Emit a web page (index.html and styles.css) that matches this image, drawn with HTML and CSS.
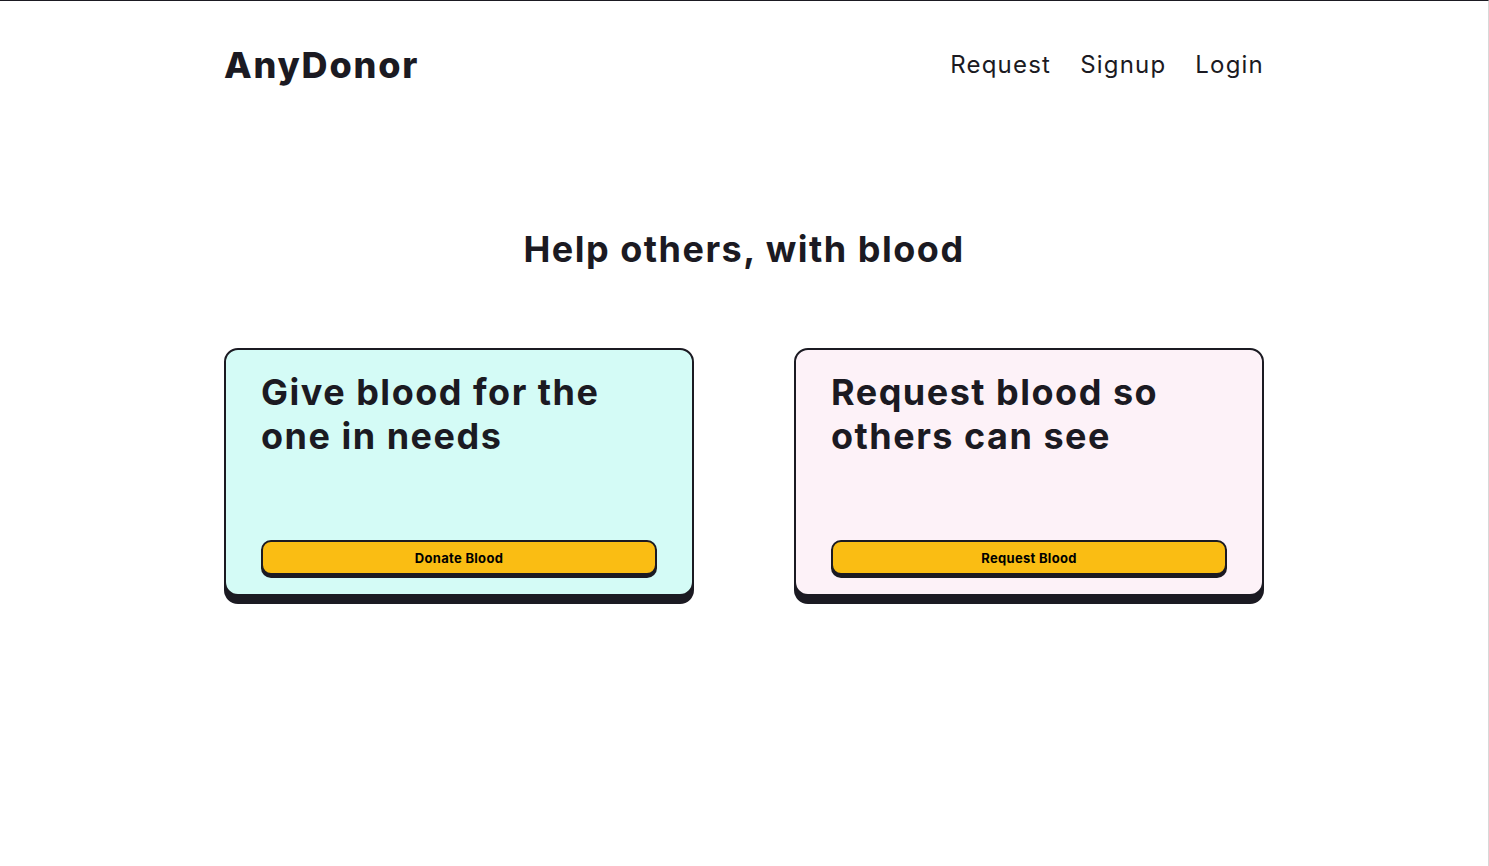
FILE: index.html
```html
<!DOCTYPE html>
<html lang="en">
<head>
<meta charset="utf-8">
<title>AnyDonor</title>
<link rel="stylesheet" href="styles.css">
</head>
<body>
<div class="frame">
  <div class="page">
    <header class="header">
      <a class="logo" href="#">AnyDonor</a>
      <nav class="nav">
        <a href="#">Request</a>
        <a href="#">Signup</a>
        <a href="#">Login</a>
      </nav>
    </header>
    <main class="main">
      <h1 class="title">Help others, with blood</h1>
      <div class="cards">
        <section class="card card-give">
          <h2 class="card-title">Give blood for the one in needs</h2>
          <button class="btn">Donate Blood</button>
        </section>
        <section class="card card-request">
          <h2 class="card-title">Request blood so others can see</h2>
          <button class="btn">Request Blood</button>
        </section>
      </div>
    </main>
  </div>
</div>
</body>
</html>
```

FILE: styles.css
```css
* { box-sizing: border-box; }
html, body { margin: 0; padding: 0; height: 100%; }
body {
  font-family: Inter, "Noto Sans", sans-serif;
  color: #1b1a22;
  background: #fff;
}
.frame {
  min-height: 100%;
  border-top: 1px solid #1b1a22;
  border-right: 1px solid #d8d8d8;
}
.page {
  width: 1040px;
  margin: 0 auto;
}
.header {
  display: flex;
  justify-content: space-between;
  align-items: center;
  height: 128px;
  padding-bottom: 1px;
}
.logo {
  font-size: 36px;
  font-weight: 800;
  color: #1b1a22;
  text-decoration: none;
  letter-spacing: 1.8px;
}
.nav { display: flex; gap: 29px; }
.nav a {
  font-size: 24px;
  color: #1b1a22;
  text-decoration: none;
  letter-spacing: 1.2px;
}
.main { padding-top: 96px; }
.title {
  margin: 0;
  text-align: center;
  font-size: 36px;
  font-weight: 700;
  line-height: 48px;
  letter-spacing: 1.5px;
}
.cards {
  display: flex;
  gap: 100px;
  margin-top: 75px;
}
.card {
  width: 470px;
  height: 248px;
  border: 2px solid #1b1a22;
  border-radius: 14px;
  box-shadow: 0 8px 0 #1b1a22;
  padding: 20px 35px 0 35px;
  display: flex;
  flex-direction: column;
}
.card-give { background: #d4fbf6; }
.card-request { background: #fdf2f8; }
.card-title {
  margin: 0;
  font-size: 36px;
  font-weight: 700;
  line-height: 44px;
  letter-spacing: 1.5px;
  flex: 1;
}
.btn {
  margin-bottom: 19px;
  height: 35px;
  width: 100%;
  border: 2px solid #1b1a22;
  border-radius: 10px;
  background: #fabd13;
  box-shadow: 0 3px 0 #1b1a22;
  font-family: Inter, "Noto Sans", sans-serif;
  font-size: 13px;
  font-weight: 700;
  letter-spacing: 0.3px;
  color: #000;
  cursor: pointer;
}
```
